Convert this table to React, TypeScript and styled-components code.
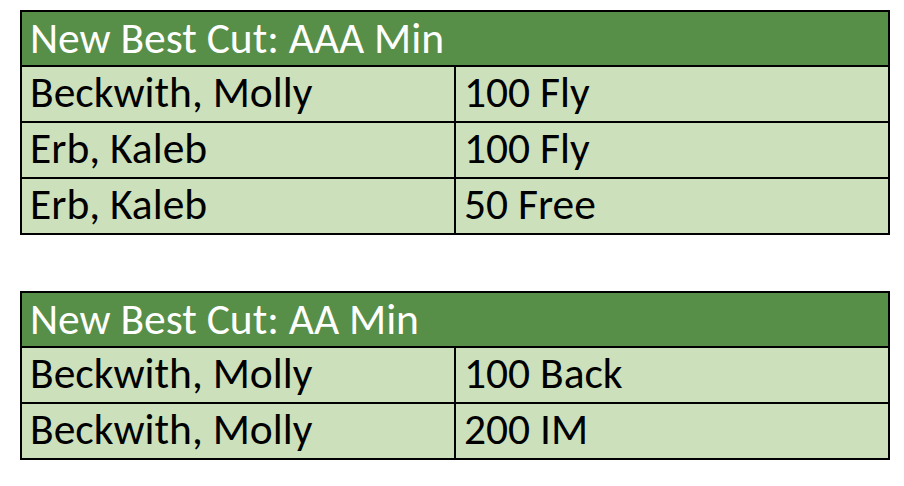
import React from 'react';
import styled, { createGlobalStyle } from 'styled-components';

type Row = { name: string; event: string };

type CutTable = {
  title: string;
  rows: Row[];
};

const tables: CutTable[] = [
  {
    title: 'New Best Cut: AAA Min',
    rows: [
      { name: 'Beckwith, Molly', event: '100 Fly' },
      { name: 'Erb, Kaleb', event: '100 Fly' },
      { name: 'Erb, Kaleb', event: '50 Free' },
    ],
  },
  {
    title: 'New Best Cut: AA Min',
    rows: [
      { name: 'Beckwith, Molly', event: '100 Back' },
      { name: 'Beckwith, Molly', event: '200 IM' },
    ],
  },
];

const GlobalStyle = createGlobalStyle`
  html, body {
    margin: 0;
    padding: 0;
    background: #ffffff;
  }
  body {
    font-family: Carlito, Calibri, "Open Sans", "Noto Sans", sans-serif;
  }
`;

const Page = styled.div`
  display: flex;
  flex-direction: column;
  gap: 56px;
  padding: 10px 0 0 20px;
  width: 870px;
`;

const Sheet = styled.div`
  display: flex;
  flex-direction: column;
  border: 2px solid #000;
`;

const Header = styled.div`
  display: flex;
  align-items: center;
  height: 53px;
  padding: 1px 0 0 8px;
  box-sizing: border-box;
  background: #578e48;
  color: #ffffff;
  font-size: 43.5px;
  line-height: 1;
  white-space: nowrap;
`;

const DataRow = styled.div`
  display: grid;
  grid-template-columns: 432px 1fr;
  height: 56px;
  border-top: 2px solid #000;
  box-sizing: border-box;
  background: #cce0bb;
`;

const Cell = styled.div<{ $divider?: boolean }>`
  display: flex;
  align-items: center;
  padding: 0 0 2px 8px;
  border-left: ${p => (p.$divider ? '2px solid #000' : 'none')};
  color: #000;
  font-size: 43.5px;
  line-height: 1;
  white-space: nowrap;
`;

export default function App() {
  return (
    <>
      <GlobalStyle />
      <Page>
        {tables.map(table => (
          <Sheet key={table.title}>
            <Header>{table.title}</Header>
            {table.rows.map((row, i) => (
              <DataRow key={i}>
                <Cell>{row.name}</Cell>
                <Cell $divider>{row.event}</Cell>
              </DataRow>
            ))}
          </Sheet>
        ))}
      </Page>
    </>
  );
}
